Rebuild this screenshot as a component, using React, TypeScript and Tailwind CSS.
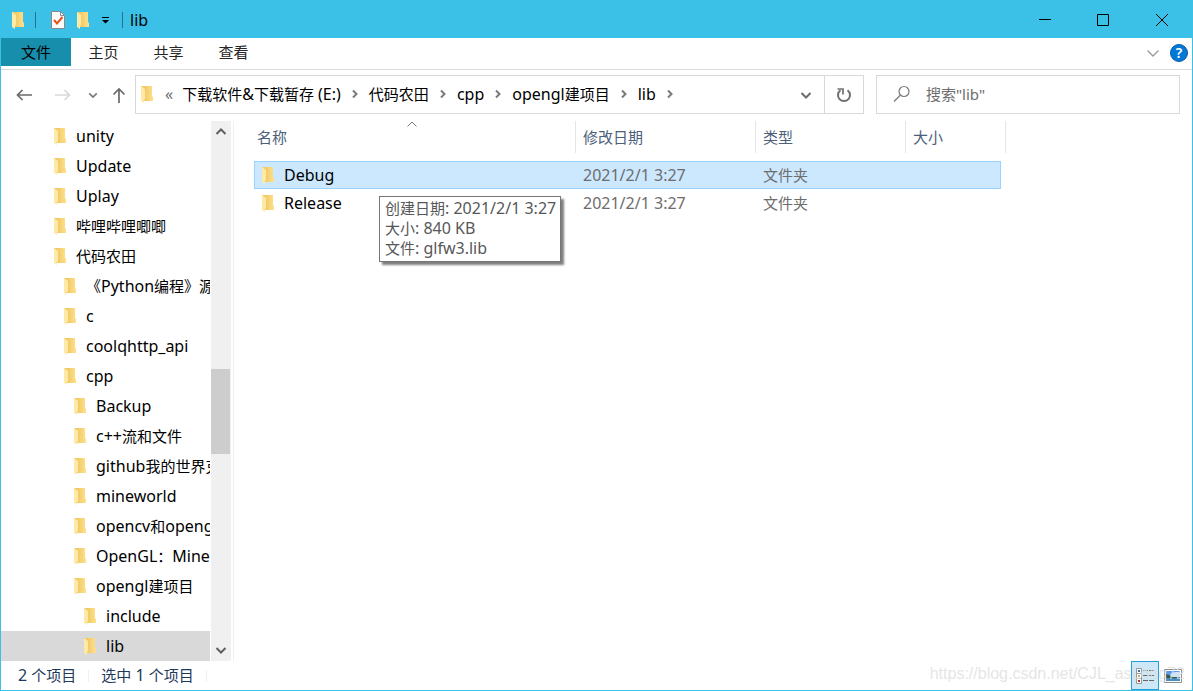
import { Fragment } from "react";

type TreeItem = {
  name: string;
  depth: number;
  selected?: boolean;
};

type FileRow = {
  name: string;
  modified: string;
  type: string;
  selected?: boolean;
};

const tree: TreeItem[] = [
  { name: "unity", depth: 0 },
  { name: "Update", depth: 0 },
  { name: "Uplay", depth: 0 },
  { name: "哔哩哔哩唧唧", depth: 0 },
  { name: "代码农田", depth: 0 },
  { name: "《Python编程》源码", depth: 1 },
  { name: "c", depth: 1 },
  { name: "coolqhttp_api", depth: 1 },
  { name: "cpp", depth: 1 },
  { name: "Backup", depth: 2 },
  { name: "c++流和文件", depth: 2 },
  { name: "github我的世界克隆", depth: 2 },
  { name: "mineworld", depth: 2 },
  { name: "opencv和opengl", depth: 2 },
  { name: "OpenGL：Minecraft", depth: 2 },
  { name: "opengl建项目", depth: 2 },
  { name: "include", depth: 3 },
  { name: "lib", depth: 3, selected: true }
];

const indent = ["pl-[52px]", "pl-[62px]", "pl-[72px]", "pl-[82px]"];

const crumbs = ["下载软件&下载暂存 (E:)", "代码农田", "cpp", "opengl建项目", "lib"];

const rows: FileRow[] = [
  { name: "Debug", modified: "2021/2/1 3:27", type: "文件夹", selected: true },
  { name: "Release", modified: "2021/2/1 3:27", type: "文件夹" }
];

// Latin runs are set one size up so they balance with the Chinese glyphs.
function Label({ text }: { text: string }) {
  return (
    <>
      {text.split(/([\x20-\x7e]+)/).map((part, i) =>
        i % 2 === 1 ? (
          <span key={i} className="text-[16px]">
            {part}
          </span>
        ) : (
          <Fragment key={i}>{part}</Fragment>
        )
      )}
    </>
  );
}

function FolderIcon() {
  return (
    <svg width="14" height="18" viewBox="0 0 14 18" className="shrink-0" aria-hidden="true">
      <defs>
        <linearGradient id="folder" x1="0" x2="1">
          <stop offset="0.3" stopColor="#f0ca68" />
          <stop offset="1" stopColor="#ffe08a" />
        </linearGradient>
      </defs>
      <path d="M1 1h11v10l1 1v4H3z" fill="url(#folder)" />
      <path d="M1 1l4 3v10l-1 1v3L1 16z" fill="#ffe9a6" />
    </svg>
  );
}

function Chevron({ dir, className }: { dir: "up" | "down" | "right"; className?: string }) {
  const paths = {
    up: "M1.500 8L6 3.500L10.500 8",
    down: "M1.500 4L6 8.500L10.500 4",
    right: "M4 2.500L7.500 6L4 9.500"
  };
  return (
    <svg width="12" height="12" viewBox="0 0 12 12" className={className} aria-hidden="true">
      <path d={paths[dir]} fill="none" stroke="currentColor" strokeWidth="2" />
    </svg>
  );
}

function TitleBar() {
  return (
    <header className="flex h-[37px] shrink-0 items-center bg-[#3bc1e8] pl-[10px]">
      <FolderIcon />
      <span className="ml-[10px] h-4 w-px bg-[#2a6f88]" />
      <button className="ml-[15px]" aria-label="属性">
        <svg width="14" height="18" viewBox="0 0 14 18">
          <path d="M0.500 0.500h9l4 4v13h-13z" fill="#fbfbfb" stroke="#8a8a8a" />
          <path d="M9.500 0.500v4h4" fill="none" stroke="#8a8a8a" />
          <path d="M3 9l3 3.500L11.500 6" fill="none" stroke="#e8501e" strokeWidth="2" />
        </svg>
      </button>
      <button className="ml-[11px]" aria-label="新建文件夹">
        <FolderIcon />
      </button>
      <button className="ml-[12px]" aria-label="自定义快速访问工具栏">
        <svg width="7" height="8" viewBox="0 0 7 8">
          <path d="M0 1h7v1H0zM0 4h7L3.500 7.500z" fill="#000" />
        </svg>
      </button>
      <span className="ml-[13px] h-4 w-px bg-[#2a6f88]" />
      <h1 className="ml-[7px] text-[16px] leading-[22px]">lib</h1>
      <div className="ml-auto flex h-full">
        <button className="flex w-[58px] items-center justify-center" aria-label="最小化">
          <svg width="12" height="12" viewBox="0 0 12 12">
            <path d="M0 5.500h12" stroke="#000" />
          </svg>
        </button>
        <button className="flex w-[58px] items-center justify-center" aria-label="最大化">
          <svg width="12" height="12" viewBox="0 0 12 12">
            <path d="M0.500 0.500h11v11h-11z" fill="none" stroke="#000" />
          </svg>
        </button>
        <button className="flex w-[60px] items-center justify-center" aria-label="关闭">
          <svg width="12" height="12" viewBox="0 0 12 12">
            <path d="M0 0l12 12M12 0L0 12" stroke="#000" />
          </svg>
        </button>
      </div>
    </header>
  );
}

function Ribbon() {
  return (
    <nav className="flex h-8 shrink-0 border-b border-[#dadbdc] text-[#262626]">
      <button className="mb-[3px] w-[70px] bg-[#178fac] text-black">文件</button>
      <button className="mb-[3px] w-[65px]">主页</button>
      <button className="mb-[3px] w-[65px]">共享</button>
      <button className="mb-[3px] w-[65px]">查看</button>
      <button className="ml-auto" aria-label="展开功能区">
        <svg width="12" height="7" viewBox="0 0 12 7">
          <path d="M0.500 0.500L6 6l5.500-5.500" fill="none" stroke="#999" strokeWidth="1.300" />
        </svg>
      </button>
      <button
        className="mt-[6px] mr-[4px] ml-[11px] flex size-[18px] items-center justify-center rounded-full border border-[#0b5cad] bg-[#0078d7] text-[14px] font-semibold text-white"
        aria-label="帮助"
      >
        ?
      </button>
    </nav>
  );
}

function AddressBar() {
  return (
    <div className="flex shrink-0 items-center pt-[5px] pr-[12px] pb-[7px] pl-[15px]">
      <button aria-label="后退">
        <svg width="16" height="12" viewBox="0 0 16 12">
          <path d="M16 6H1.500M6.500 1l-5 5l5 5" fill="none" stroke="#6b6b6b" strokeWidth="1.700" />
        </svg>
      </button>
      <button className="ml-[23px]" aria-label="前进">
        <svg width="16" height="12" viewBox="0 0 16 12">
          <path d="M0 6h14.500M9.500 1l5 5l-5 5" fill="none" stroke="#d9d9d9" strokeWidth="1.700" />
        </svg>
      </button>
      <button className="ml-[17px] text-[#7a7a7a]" aria-label="最近浏览的位置">
        <Chevron dir="down" className="size-[10px]" />
      </button>
      <button className="ml-[14px]" aria-label="上移">
        <svg width="14" height="16" viewBox="0 0 14 16">
          <path d="M7 16V2M1.500 7.500L7 2l5.500 5.500" fill="none" stroke="#6b6b6b" strokeWidth="1.700" />
        </svg>
      </button>
      <div className="ml-[9px] flex h-[39px] min-w-0 flex-1 border border-[#d9d9d9]">
        <div className="flex min-w-0 flex-1 items-center overflow-hidden pb-[2px] pl-[4px] whitespace-nowrap">
          <FolderIcon />
          <span className="mr-[9px] ml-[11px] text-[16px] text-[#6b6b6b]">«</span>
          {crumbs.map((crumb) => (
            <Fragment key={crumb}>
              <a href="#" className="text-black">
                <Label text={crumb} />
              </a>
              <Chevron dir="right" className="mx-[8px] shrink-0 text-[#7a7a7a]" />
            </Fragment>
          ))}
        </div>
        <button className="w-[37px] text-[#6b6b6b]" aria-label="以前的位置">
          <Chevron dir="down" className="mx-auto" />
        </button>
        <button className="w-[39px] border-l border-[#d9d9d9]" aria-label="刷新">
          <svg width="16" height="16" viewBox="0 0 16 16" className="mx-auto">
            <path d="M11.500 3.200A6 6 0 1 1 4.500 3.200" fill="none" stroke="#707070" strokeWidth="2" />
            <path d="M1.500 2H7v5.500" fill="none" stroke="#707070" strokeWidth="1.700" />
          </svg>
        </button>
      </div>
      <label className="ml-[12px] flex h-[39px] w-[304px] items-center border border-[#d9d9d9] pb-[2px] pl-[16px]">
        <svg width="18" height="18" viewBox="0 0 18 18" className="shrink-0">
          <circle cx="11" cy="6.500" r="5" fill="none" stroke="#7a7a7a" strokeWidth="1.200" />
          <path d="M7.500 10L1 16.500" stroke="#7a7a7a" strokeWidth="1.200" />
        </svg>
        <input
          type="text"
          aria-label="搜索"
          placeholder={'搜索"lib"'}
          className="ml-[15px] w-full outline-none placeholder:text-[#6d6d6d]"
        />
      </label>
    </div>
  );
}

function Sidebar() {
  return (
    <aside className="flex w-[233px] shrink-0 border-r border-[#f0f0f0]">
      <ul className="min-w-0 flex-1 overflow-hidden">
        {tree.map((item) => (
          <li key={item.name} className={item.selected ? "bg-[#d9d9d9]" : ""}>
            <a
              href="#"
              className={`flex h-[30px] items-center overflow-hidden whitespace-nowrap ${indent[item.depth]}`}
            >
              <FolderIcon />
              <span className="ml-[9px]">
                <Label text={item.name} />
              </span>
            </a>
          </li>
        ))}
      </ul>
      <div className="mr-[2px] ml-px flex w-[20px] flex-col items-center bg-[#f0f0f0] text-[#606060]">
        <Chevron dir="up" className="mt-[5px] shrink-0" />
        <div className="flex-[231]" />
        <div className="mr-px w-[19px] flex-[85] bg-[#cdcdcd]" />
        <div className="flex-[190]" />
        <Chevron dir="down" className="mb-[5px] shrink-0" />
      </div>
    </aside>
  );
}

function Tooltip() {
  return (
    <div
      role="tooltip"
      className="absolute top-[75px] left-[145px] border border-[#767676] bg-white pt-px pr-[4px] pb-[3px] pl-[5px] leading-[20px] whitespace-nowrap text-[#575757] shadow-[3px_3px_2px_#00000080]"
    >
      <p>
        <Label text="创建日期: 2021/2/1 3:27" />
      </p>
      <p>
        <Label text="大小: 840 KB" />
      </p>
      <p>
        <Label text="文件: glfw3.lib" />
      </p>
    </div>
  );
}

function FileList() {
  const heading = "pb-[8px] text-left font-normal text-[#4c607a]";
  const headingBox = "flex h-8 items-center border-r border-[#e5e5e5]";
  return (
    <main className="relative min-w-0 flex-1 pl-[20px]">
      <table className="w-[752px] table-fixed border-separate border-spacing-0">
        <colgroup>
          <col className="w-[322px]" />
          <col className="w-[180px]" />
          <col className="w-[150px]" />
          <col className="w-[95px]" />
          <col className="w-[5px]" />
        </colgroup>
        <thead>
          <tr>
            <th className={heading}>
              <div className={`relative pl-[3px] ${headingBox}`}>
                名称
                <svg width="10" height="6" viewBox="0 0 10 6" className="absolute top-0 left-[153px]">
                  <path d="M0.500 5.500L5 1l4.500 4.500" fill="none" stroke="#777" />
                </svg>
              </div>
            </th>
            <th className={heading}>
              <div className={`pl-[7px] ${headingBox}`}>修改日期</div>
            </th>
            <th className={heading}>
              <div className={`pl-[7px] ${headingBox}`}>类型</div>
            </th>
            <th className={heading} colSpan={2}>
              <div className={`pl-[7px] ${headingBox}`}>大小</div>
            </th>
          </tr>
        </thead>
        <tbody>
          {rows.map((row) => {
            const cell = row.selected ? "h-[28px] border-y border-[#99d1ff] bg-[#cce8ff]" : "h-[28px]";
            return (
              <tr key={row.name} className="text-[#6d6d6d]">
                <td className={`text-black ${cell} ${row.selected ? "border-l pl-[6px]" : "pl-[7px]"}`}>
                  <div className="flex items-center">
                    <FolderIcon />
                    <span className="ml-[9px] text-[16px] leading-[24px]">{row.name}</span>
                  </div>
                </td>
                <td className={`pl-[7px] text-[16px] ${cell}`}>{row.modified}</td>
                <td className={`pl-[7px] ${cell}`}>{row.type}</td>
                <td className={`${cell} ${row.selected ? "border-r" : ""}`} />
                <td />
              </tr>
            );
          })}
        </tbody>
      </table>
      <Tooltip />
    </main>
  );
}

function StatusBar() {
  return (
    <footer className="relative flex h-[29px] shrink-0 items-center pl-[17px] text-[#1e395b]">
      <span className="pb-[2px]">
        <Label text="2 个项目" />
      </span>
      <span className="mx-[12px] h-3 w-px bg-[#f0f0f0]" />
      <span className="pb-[2px]">
        <Label text="选中 1 个项目" />
      </span>
      <span className="ml-[12px] h-3 w-px bg-[#f0f0f0]" />
      <button
        className="ml-auto flex h-[29px] w-[28px] items-center justify-center border border-[#26a0da] bg-[#cce8f6]"
        aria-label="详细信息"
      >
        <svg width="18" height="16" viewBox="0 0 18 16">
          <path d="M0.500 0.500h5v15h-5zM0.500 5.500h5M0.500 10.500h5" fill="#fff" stroke="#999" />
          <path d="M2 2h2v2H2z" fill="#3b78b8" />
          <path d="M2 7h2v2H2z" fill="#c9a36a" />
          <path d="M2 12h2v2H2z" fill="#b8322a" />
          <path d="M7 2.500h5M13 2.500h5M7 7.500h5M13 7.500h5M7 12.500h5M13 12.500h5" stroke="#666" />
        </svg>
      </button>
      <button className="mr-[10px] ml-[5px]" aria-label="大图标">
        <svg width="18" height="14" viewBox="0 0 18 14">
          <path d="M0.500 0.500h17v13h-17z" fill="#fff" stroke="#8f8f8f" />
          <path d="M2 2h14v10H2z" fill="#5b9be8" />
          <path d="M7 4.500c2-2 5-1 9-2V8H6z" fill="#cfe5fa" />
          <path d="M2 5l3 1l3 2h8v1.500H2z" fill="#2f5c48" />
          <path d="M2 9.500h14V12H2z" fill="#4a8fc4" />
        </svg>
      </button>
      <span className="pointer-events-none absolute right-[7px] bottom-[6px] font-['Liberation_Sans'] text-[16px] leading-[20px] text-[#dededecc]">
        https://blog.csdn.net/CJL_asLong72
      </span>
    </footer>
  );
}

export default function App() {
  return (
    <div className="flex min-h-screen flex-col border border-[#3bc1e8] bg-white font-['Noto_Sans','Noto_Sans_CJK_SC',sans-serif] text-[15px] leading-[24px] text-black">
      <TitleBar />
      <Ribbon />
      <AddressBar />
      <div className="flex flex-1">
        <Sidebar />
        <FileList />
      </div>
      <StatusBar />
    </div>
  );
}
